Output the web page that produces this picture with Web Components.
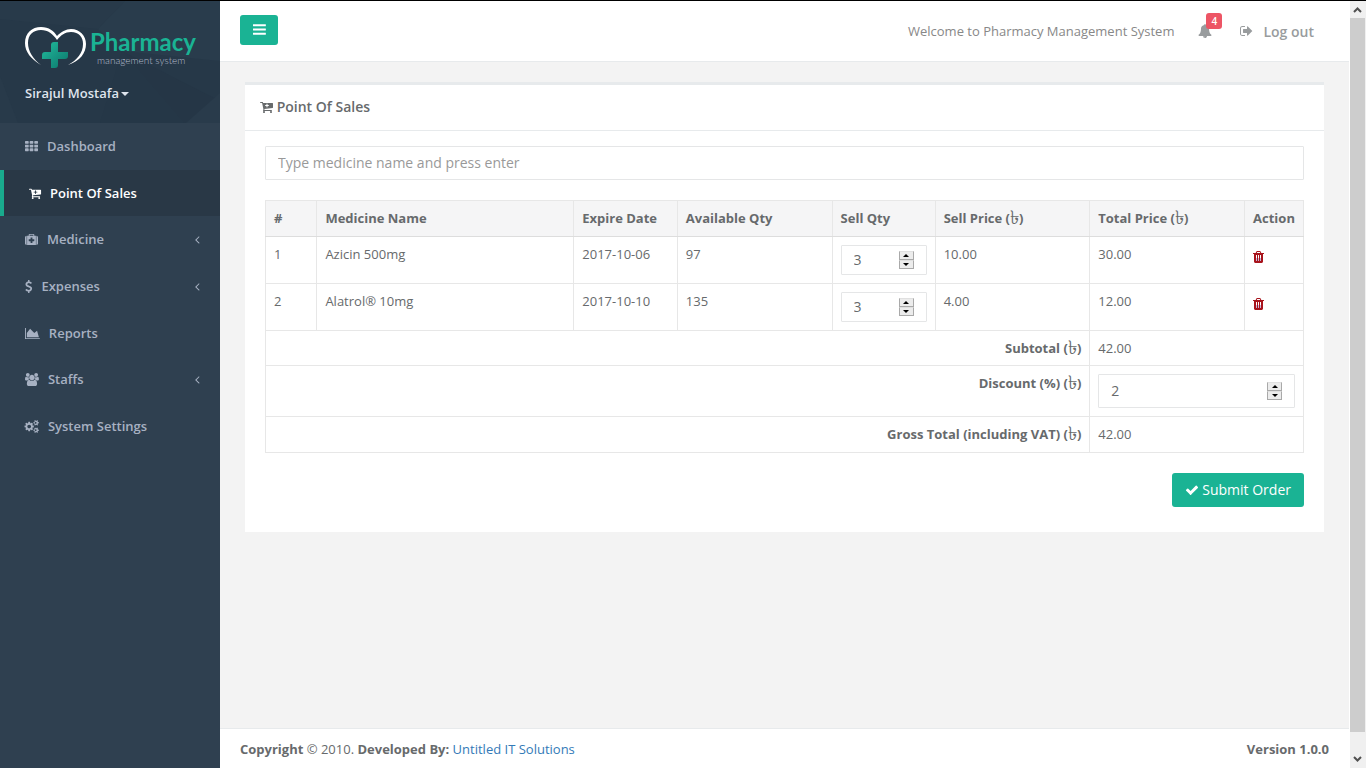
<!DOCTYPE html>
<html lang="en">
<head>
<meta charset="utf-8">
<title>Pharmacy Management System – Point Of Sales</title>
<style>
  html, body { height: 100%; }
  body { margin: 0; background: #000; color: #676a6c; font: 13px/19px "Open Sans", "Noto Sans", sans-serif; }
</style>
</head>
<body>
<pos-app></pos-app>

<script>
const cog = 'v140q0 16-149 31-12 27-30 52 51 113 51 138 0 4-4 7-122 71-124 71-8 0-46-47t-52-68q-20 2-30 2t-30-2q-14 21-52 68t-46 47q-2 0-124-71-4-3-4-7 0-25 51-138-18-25-30-52-149-15-149-31v-140q0-16 149-31 13-29 30-52-51-113-51-138 0-4 4-7 4-2 35-20t59-34 30-16q8 0 46 46.500t52 67.500q20-2 30-2t30 2q51-71 92-112l6-2q4 0 124 70 4 3 4 7 0 25-51 138 17 23 30 52 149 15 149 31z';
const slot = 'v-704q0-14-9-23t-23-9h-64q-14 0-23 9t-9 23v704q0 14 9 23t23 9h64q14 0 23-9t9-23z';
const bar = 'v128q0 26-19 45t-45 19h-1408q-26 0-45-19t-19-45v-128q0-26 19-45t45-19h1408q26 0 45 19t19 45z';
const cell = (x, y) => `M${x} ${y}v192q0 40-28 68t-68 28h-320q-40 0-68-28t-28-68v-192q0-40 28-68t68-28h320q40 0 68 28t28 68z`;
const ICONS = {
  bars: [128, 1536, `M1664 1344${bar}M1664 832${bar}M1664 320${bar}`],
  th: [0, 1792, [224, 736, 1248].map(y => cell(512, y) + cell(1152, y) + cell(1792, y)).join('')],
  cart: [64, 1664, 'M1216 704q0-26-19-45t-45-19h-128v-128q0-26-19-45t-45-19-45 19-19 45v128h-128q-26 0-45 19t-19 45 19 45 45 19h128v128q0 26 19 45t45 19 45-19 19-45v-128h128q26 0 45-19t19-45zm-512 832q0 53-37.500 90.500t-90.500 37.500-90.500-37.500-37.500-90.500 37.500-90.500 90.500-37.500 90.500 37.500 37.500 90.500zm896 0q0 53-37.500 90.500t-90.500 37.500-90.500-37.500-37.500-90.500 37.500-90.500 90.500-37.500 90.500 37.500 37.500 90.500zm128-1088v512q0 24-16 42.500t-41 21.500l-1044 122q1 7 4.500 21.500t6 26.500 2.500 22q0 16-24 64h920q26 0 45 19t19 45-19 45-45 19h-1024q-26 0-45-19t-19-45q0-14 11-39.500t29.500-59.500 20.500-38l-177-823h-204q-26 0-45-19t-19-45 19-45 45-19h256q16 0 28.500 6.500t20 15.500 13 24.500 7.500 26.500 5.500 29.500 4.500 25.500h1201q26 0 45 19t19 45z'],
  medkit: [0, 1792, 'M1280 1088v-192q0-14-9-23t-23-9h-224v-224q0-14-9-23t-23-9h-192q-14 0-23 9t-9 23v224h-224q-14 0-23 9t-9 23v192q0 14 9 23t23 9h224v224q0 14 9 23t23 9h192q14 0 23-9t9-23v-224h224q14 0 23-9t9-23zM640 384h512v-128h-512zM224 384v1280q-92 0-158-66t-66-158v-832q0-92 66-158t158-66zM1504 384v1280h-1216v-1280h224v-160q0-40 28-68t68-28h576q40 0 68 28t28 68v160zM1792 608v832q0 92-66 158t-158 66v-1280q92 0 158 66t66 158z'],
  usd: [384, 1024, 'M1362 1185q0 153-99.500 263.500t-258.500 136.500v175q0 14-9 23t-23 9h-135q-13 0-22.500-9.500t-9.500-22.500v-175q-66-9-127.500-31t-101.500-44.500-74-48-46.500-37.500-17.500-18q-17-21-2-41l103-135q7-10 23-12 15-2 24 9l2 2q113 99 243 125 37 8 74 8 81 0 142.500-43t61.500-122q0-28-15-53t-33.500-42-58.500-37.500-66-32-80-32.500q-39-16-61.500-25t-61.500-26.500-62.500-31-56.500-35.500-53.500-42.500-43.500-49-35.500-58-21-66.500-8.500-78q0-138 98-242t255-134v-180q0-13 9.500-22.500t22.500-9.500h135q14 0 23 9t9 23v176q57 6 110.500 23t87 33.500 63.500 37.500 39 29 15 14q17 18 5 38l-81 146q-8 15-23 16-14 3-27-7-3-3-14.500-12t-39-26.500-58.500-32-74.500-26-85.500-11.500q-95 0-155 43t-60 111q0 26 8.500 48t29.500 41.500 39.500 33 56 31 60.500 27 70 27.500q53 20 81 31.500t76 35 75.500 42.500 62 50 53 63.500 31.500 76.500 13 94z'],
  chart: [0, 2048, 'M2048 1536v128h-2048v-1536h128v1408zM1664 512l256 896h-1664v-576l448-576 576 576z'],
  users: [0, 1920, 'M593 896q-162 5-265 128h-134q-82 0-138-40.500t-56-118.500q0-353 124-353 6 0 43.500 21t97.500 42.500 119 21.500q67 0 133-23-5 37-5 66 0 139 81 256zm1071 637q0 120-73 189.500t-194 69.500h-874q-121 0-194-69.500t-73-189.500q0-53 3.500-103.500t14-109 26.500-108.500 43-97.500 62-81 85.500-53.500 111.500-20q10 0 43 21.500t73 48 107 48 135 21.500 135-21.500 107-48 73-48 43-21.500q61 0 111.500 20t85.500 53.500 62 81 43 97.500 26.500 108.500 14 109 3.500 103.500zm-1024-1277q0 106-75 181t-181 75-181-75-75-181 75-181 181-75 181 75 75 181zm704 384q0 159-112.500 271.500t-271.500 112.500-271.500-112.500-112.500-271.500 112.500-271.500 271.500-112.500 271.500 112.500 112.500 271.500zm576 225q0 78-56 118.500t-138 40.500h-134q-103-123-265-128 81-117 81-256 0-29-5-66 66 23 133 23 59 0 119-21.500t97.500-42.500 43.500-21q124 0 124 353zm-128-609q0 106-75 181t-181 75-181-75-75-181 75-181 181-75 181 75 75 181z'],
  cogs: [0, 1920, `M832 896q0-106-75-181t-181-75-181 75-75 181 75 181 181 75 181-75 75-181zm768 512q0-52-38-90t-90-38-90 38-38 90q0 53 37.500 90.500t90.500 37.500 90.500-37.500 37.500-90.500zm0-1024q0-52-38-90t-90-38-90 38-38 90q0 53 37.500 90.500t90.500 37.500 90.500-37.500 37.500-90.500zm-384 421v185q0 10-7 19.500t-16 10.500l-155 24q-11 35-32 76 34 48 90 115 7 11 7 20 0 12-7 19-23 30-82.500 89.500t-78.500 59.500q-11 0-21-7l-115-90q-37 19-77 31-11 108-23 155-7 24-30 24h-186q-11 0-20-7.500t-10-17.500l-23-153q-34-10-75-31l-118 89q-7 7-20 7-11 0-21-8-144-133-144-160 0-9 7-19 10-14 41-53t47-61q-23-44-35-82l-152-24q-10-1-17-9.500t-7-19.500v-185q0-10 7-19.500t16-10.500l155-24q11-35 32-76-34-48-90-115-7-11-7-20 0-12 7-20 22-30 82-89t79-59q11 0 21 7l115 90q34-18 77-32 11-108 23-154 7-24 30-24h186q11 0 20 7.500t10 17.500l23 153q34 10 75 31l118-89q8-7 20-7 11 0 21 8 144 133 144 160 0 8-7 19-12 16-42 54t-45 60q23 48 34 82l152 23q10 2 17 10.500t7 19.500zM1920 1338${cog}M1920 314${cog}`],
  bell: [0, 1792, 'M912 1696q0-16-16-16-59 0-101.500-42.500t-42.500-101.500q0-16-16-16t-16 16q0 73 51.500 124.500t124.500 51.500q16 0 16-16zm816-288q0 52-38 90t-90 38h-448q0 106-75 181t-181 75-181-75-75-181h-448q-52 0-90-38t-38-90q50-42 91-88t85-119.500 74.500-158.500 50-206 19.500-260q0-152 117-282.500t307-158.500q-8-19-8-39 0-40 28-68t68-28 68 28 28 68q0 20-8 39 190 28 307 158.500t117 282.500q0 139 19.500 260t50 206 74.500 158.500 85 119.500 91 88z'],
  signout: [64, 1664, 'M704 1440q0 4 1 20t.5 26.500-3 23.500-10 19.500-20.500 6.500h-320q-119 0-203.500-84.500t-84.500-203.500v-704q0-119 84.500-203.500t203.500-84.500h320q13 0 22.500 9.500t9.500 22.500q0 4 1 20t.5 26.500-3 23.500-10 19.500-20.500 6.500h-320q-66 0-113 47t-47 113v704q0 66 47 113t113 47h312l11.500 1 11.500 3 8 5.500 7 9 2 13.500zm928-544q0 26-19 45l-544 544q-19 19-45 19t-45-19-19-45v-288h-448q-26 0-45-19t-19-45v-384q0-26 19-45t45-19h448v-288q0-26 19-45t45-19 45 19l544 544q19 19 19 45z'],
  check: [0, 1792, 'M1671 566q0 40-28 68l-724 724-136 136q-28 28-68 28t-68-28l-136-136-362-362q-28-28-28-68t28-68l136-136q28-28 68-28t68 28l294 295 656-657q28-28 68-28t68 28l136 136q28 28 28 68z'],
  angle: [582, 640, 'M1203 544q0 13-10 23l-393 393 393 393q10 10 10 23t-10 23l-50 50q-10 10-23 10t-23-10l-466-466q-10-10-10-23t10-23l466-466q10-10 23-10t23 10l50 50q10 10 10 23z'],
  trash: [192, 1408, `M704 1376${slot}M960 1376${slot}M1216 1376${slot}M672 384h448l-48-117q-7-9-17-11h-317q-10 2-17 11zM1600 416v64q0 14-9 23t-23 9h-96v948q0 83-47 143.500t-113 60.500h-832q-66 0-113-58.500t-47-141.500v-952h-96q-14 0-23-9t-9-23v-64q0-14 9-23t23-9h309l70-167q15-37 54-63t79-26h320q40 0 79 26t54 63l70 167h309q14 0 23 9t9 23z`]
};

function define(name, markup, setup) {
  const template = document.createElement('template');
  template.innerHTML = markup;
  customElements.define(name, class extends HTMLElement {
    constructor() {
      super();
      this.attachShadow({ mode: 'open' }).append(template.content.cloneNode(true));
    }
    connectedCallback() { if (setup) setup(this, this.shadowRoot); }
  });
}

/* Icon: <fa-icon name="…">, sized by --size (height of the em square) */
define('fa-icon', `
<style>
  :host { display: inline-block; vertical-align: -2px; line-height: 0; }
  svg { display: block; height: var(--size, 14px); fill: currentColor; overflow: visible; }
</style>
<svg aria-hidden="true"><path fill-rule="evenodd"/></svg>`, (host, root) => {
  const [x, w, d] = ICONS[host.getAttribute('name')];
  root.querySelector('svg').setAttribute('viewBox', `${x} 0 ${w} 1792`);
  root.querySelector('path').setAttribute('d', d);
});

define('brand-logo', `
<style>
  :host { display: flex; align-items: flex-start; height: 44px; }
  svg { width: 62px; height: 44px; flex: none; }
  .words { display: flex; flex-direction: column; padding: 2px 0 0 3px; white-space: nowrap; font-family: Lato, sans-serif; }
  b { color: #1ab394; font-size: 24px; line-height: 27px; font-weight: 700; }
  small { color: #b4bccb; font-size: 10px; line-height: 12px; padding-left: 7px; font-weight: 300; margin-top: -1px; }
</style>
<svg viewBox="0 0 62 44" aria-hidden="true">
  <defs><linearGradient id="g" x2="1" y2="1"><stop offset="0" stop-color="#22bd9e"/><stop offset="1" stop-color="#0c746b"/></linearGradient></defs>
  <path d="M16 39C6 33 0 26 0 17C0 7 7 1 16 1C24 1 29 5 32 10C36 6 41 3 46 3C55 3 61 10 61 18C61 27 55 35 43 39C52 34 58 27 58 18C58 11 54 6 46 6C40 6 36 9 32 14C28 8 23 4 16 4C8 4 3 9 3 17C3 25 8 33 16 39Z" fill="#fff"/>
  <path d="M29 16h4v10h10v4q0 3-3 3h-7v6q0 3-3 3h-4v-9h-9v-4q0-3 3-3h6v-7q0-3 3-3Z" fill="url(#g)"/>
</svg>
<div class="words"><b>Pharmacy</b><small>management system</small></div>`);

/* Menu entry: icon="…", and optionally active or expandable */
customElements.define('nav-entry', class extends HTMLElement {
  constructor() {
    super();
    const active = this.hasAttribute('active');
    const arrow = this.hasAttribute('expandable') ? '<fa-icon class="arrow" name="angle"></fa-icon>' : '';
    this.attachShadow({ mode: 'open' }).innerHTML = `
<style>
  :host { display: block; }
  a { display: flex; align-items: center; height: 100%; box-sizing: border-box; padding: 0 20px 0 25px; color: #a7b1c2; font-weight: 600; text-decoration: none; }
  fa-icon { --size: 13px; }
  .icon { margin-right: 9px; }
  .arrow { margin-left: auto; }
  :host([active]) a { background: #293846; color: #fff; border-left: 4px solid #19aa8d; }
</style>
<a href="#"${active ? ' aria-current="page"' : ''}><fa-icon class="icon" name="${this.getAttribute('icon')}"></fa-icon><slot></slot>${arrow}</a>`;
  }
});

define('side-bar', `
<style>
  :host { display: block; background: #2f4050; }
  header { display: flex; flex-direction: column; position: relative; box-sizing: border-box; height: 122px; padding: 25px 20px 0 25px; background: #263848; overflow: hidden; }
  .facets { position: absolute; inset: 0; width: 100%; height: 100%; }
  brand-logo, button { position: relative; }
  button { align-self: flex-start; margin-top: 14px; padding: 0; border: 0; background: none; font: inherit; font-weight: 600; color: #dfe4ed; display: flex; align-items: center; gap: 2px; }
  .caret { border: 4px solid transparent; border-top-color: currentColor; border-bottom: 0; }
  nav { display: grid; grid-auto-rows: 1fr; height: 327px; }
</style>
<header>
  <svg class="facets" viewBox="0 0 220 122" preserveAspectRatio="none" aria-hidden="true">
    <path d="M0 0H125L98 28L0 18Z" fill="#283a4a"/><path d="M125 0H220V60L122 50L98 28Z" fill="#293c4c"/>
    <path d="M0 75L18 122H0Z" fill="#283a4a"/>
    <path d="M122 50L220 100V122H184Z" fill="#253646"/><path d="M122 50L184 122H100Z" fill="#253747"/>
    <path d="M220 92L186 122H220Z" fill="#293b4b"/>
  </svg>
  <brand-logo></brand-logo>
  <button type="button">Sirajul Mostafa<span class="caret"></span></button>
</header>
<nav aria-label="Main">
  <nav-entry icon="th">Dashboard</nav-entry>
  <nav-entry icon="cart" active>Point Of Sales</nav-entry>
  <nav-entry icon="medkit" expandable>Medicine</nav-entry>
  <nav-entry icon="usd" expandable>Expenses</nav-entry>
  <nav-entry icon="chart">Reports</nav-entry>
  <nav-entry icon="users" expandable>Staffs</nav-entry>
  <nav-entry icon="cogs">System Settings</nav-entry>
</nav>`);

define('top-bar', `
<style>
  :host { display: flex; align-items: center; box-sizing: border-box; height: 61px; padding: 0 35px 0 20px; background: #fff; border-bottom: 1px solid #e7eaec; }
  .menu { align-self: flex-start; margin-top: 14px; width: 38px; height: 30px; padding: 0; border: 0; border-radius: 3px; background: #1ab394; color: #fff; --size: 15px; }
  .welcome { margin-left: auto; color: #888; }
  .bell { position: relative; margin-left: 24px; padding: 0; border: 0; background: none; color: #999c9e; --size: 14px; }
  .badge { position: absolute; left: 8px; top: -11px; width: 16px; height: 16px; border-radius: 3px; background: #ed5565; color: #fff; font: 600 10px/16px "Open Sans", sans-serif; text-align: center; }
  a { margin-left: 28px; display: flex; align-items: center; gap: 10px; color: #999c9e; font-size: 14px; font-weight: 600; text-decoration: none; --size: 14px; }
</style>
<button class="menu" type="button" aria-label="Toggle menu"><fa-icon name="bars"></fa-icon></button>
<span class="welcome">Welcome to Pharmacy Management System</span>
<button class="bell" type="button" aria-label="Notifications"><fa-icon name="bell"></fa-icon><span class="badge">4</span></button>
<a href="#"><fa-icon name="signout"></fa-icon>Log out</a>`);

define('number-box', `
<style>
  :host { display: flex; position: relative; height: 30px; }
  input { flex: 1; min-width: 0; width: 100%; box-sizing: border-box; height: 100%; margin: 0; padding: 0 34px 2px 12px; border: 1px solid #e5e6e7; border-radius: 1px; background: #fff; color: #676a6c; font: inherit; font-size: 14px; appearance: textfield; }
  input::-webkit-inner-spin-button { appearance: none; margin: 0; }
  .spin { position: absolute; right: 13px; top: 50%; height: 18px; margin-top: -9px; width: 15px; display: flex; flex-direction: column; }
  button { flex: 1; display: flex; align-items: center; justify-content: center; padding: 0; border: 1px solid #a9a9a9; border-top-color: #e0e0e0; background: #ececec; }
  button::before { content: ""; border: 3px solid transparent; border-bottom-color: #000; border-top: 0; }
  .down::before { border: 3px solid transparent; border-top-color: #000; border-bottom: 0; }
</style>
<input type="number">
<span class="spin"><button type="button" class="up" tabindex="-1" aria-label="Increase"></button><button type="button" class="down" tabindex="-1" aria-label="Decrease"></button></span>`,
(host, root) => {
  const input = root.querySelector('input');
  input.value = host.getAttribute('value');
  input.setAttribute('aria-label', host.getAttribute('label'));
  root.querySelector('.up').onclick = () => input.stepUp();
  root.querySelector('.down').onclick = () => input.stepDown();
});

define('order-table', `
<style>
  :host { display: block; }
  table { width: 100%; border-collapse: collapse; border: 1px solid #e7e7e7; }
  th, td { padding: 8px; border: 1px solid #e7e7e7; text-align: left; vertical-align: top; line-height: 18px; }
  thead th { background: #f5f5f6; line-height: 19px; border-bottom-color: #ddd; white-space: nowrap; font-weight: 700; }
  tfoot th { text-align: right; font-weight: 700; }
  .grand th { line-height: 19px; }
  .taka { font-size: 19px; line-height: 0; font-weight: 400; vertical-align: -1px; }
  .delete { display: block; margin-top: 5px; padding: 0; border: 0; background: linear-gradient(#c9b4d8, #c9b4d8) center 8px / 7px 5px no-repeat; color: #a8141c; line-height: 0; --size: 14px; }
  .tall { height: 34px; }
</style>
<table>
  <colgroup><col style="width:5%"><col style="width:25%"><col style="width:10%"><col style="width:15%"><col style="width:10%"><col style="width:15%"><col style="width:15%"><col style="width:5%"></colgroup>
  <thead><tr><th>#</th><th>Medicine Name</th><th>Expire Date</th><th>Available Qty</th><th>Sell Qty</th><th>Sell Price (<span class="taka">৳</span>)</th><th>Total Price (<span class="taka">৳</span>)</th><th>Action</th></tr></thead>
  <tbody>
    <tr><td>1</td><td>Azicin 500mg</td><td>2017-10-06</td><td>97</td><td><number-box value="3" label="Sell quantity, Azicin 500mg"></number-box></td><td>10.00</td><td>30.00</td><td><button class="delete" type="button" aria-label="Remove Azicin 500mg"><fa-icon name="trash"></fa-icon></button></td></tr>
    <tr><td>2</td><td>Alatrol® 10mg</td><td>2017-10-10</td><td>135</td><td><number-box value="3" label="Sell quantity, Alatrol 10mg"></number-box></td><td>4.00</td><td>12.00</td><td><button class="delete" type="button" aria-label="Remove Alatrol 10mg"><fa-icon name="trash"></fa-icon></button></td></tr>
  </tbody>
  <tfoot>
    <tr><th colspan="6">Subtotal (<span class="taka">৳</span>)</th><td colspan="2">42.00</td></tr>
    <tr><th colspan="6">Discount (%) (<span class="taka">৳</span>)</th><td colspan="2"><number-box class="tall" value="2" label="Discount"></number-box></td></tr>
    <tr class="grand"><th colspan="6">Gross Total (including VAT) (<span class="taka">৳</span>)</th><td colspan="2">42.00</td></tr>
  </tfoot>
</table>`);

define('content-panel', `
<style>
  :host { display: block; background: #fff; border-top: 3px solid #e7eaec; }
  h5 { margin: 0; padding: 12px 15px 14px; border-bottom: 1px solid #e7eaec; font-size: 14px; line-height: 19px; font-weight: 600; --size: 14px; }
  .body { padding: 15px 20px 25px; }
</style>
<h5><slot name="title"></slot></h5>
<div class="body"><slot></slot></div>`);

define('pos-form', `
<style>
  :host { display: block; }
  input { display: block; width: 100%; height: 34px; box-sizing: border-box; margin: 0 0 20px; padding: 0 12px 2px; border: 1px solid #e5e6e7; border-radius: 1px; font: inherit; font-size: 14px; color: inherit; }
  input::placeholder { color: #999; opacity: 1; }
  footer { display: flex; justify-content: flex-end; margin-top: 20px; }
  button { height: 34px; padding: 0 13px 1px; border: 0; border-radius: 3px; background: #1ab394; color: #fff; font: inherit; font-size: 14px; --size: 14px; }
</style>
<input type="text" placeholder="Type medicine name and press enter" aria-label="Medicine name">
<order-table></order-table>
<footer><button type="button"><fa-icon name="check"></fa-icon> Submit Order</button></footer>`);

define('page-footer', `
<style>
  :host { display: flex; justify-content: space-between; padding: 11px 20px 9px; background: #fff; border-top: 1px solid #e7eaec; }
  a { color: #337ab7; text-decoration: none; }
</style>
<div><b>Copyright</b> © 2010. <b>Developed By:</b> <a href="#">Untitled IT Solutions</a></div>
<b>Version 1.0.0</b>`);

define('scroll-rail', `
<style>
  :host { display: flex; flex-direction: column; background: #f0f0f0; padding-right: 1px; }
  svg { width: 15px; height: 17px; fill: none; stroke: #505050; stroke-width: 2; flex: none; }
  .thumb { flex: 1; background: #cdcdcd; }
  .end { height: 36px; display: flex; align-items: flex-end; }
</style>
<svg viewBox="0 0 15 17" aria-hidden="true"><path d="M4 11l3.500-3.500L11 11"/></svg>
<div class="thumb"></div>
<div class="end"><svg viewBox="0 0 15 17" aria-hidden="true"><path d="M4 6l3.500 3.500L11 6"/></svg></div>`);

define('pos-app', `
<style>
  :host { display: grid; grid-template-columns: 220px minmax(0, 1fr) 16px; box-sizing: border-box; min-height: 100vh; padding-top: 1px; }
  .page { display: flex; flex-direction: column; background: #f3f3f3; border-right: 1px solid #fff; }
  main { flex: 1; padding: 20px 25px; }
</style>
<side-bar></side-bar>
<div class="page">
  <top-bar></top-bar>
  <main>
    <content-panel>
      <span slot="title"><fa-icon name="cart"></fa-icon> Point Of Sales</span>
      <pos-form></pos-form>
    </content-panel>
  </main>
  <page-footer></page-footer>
</div>
<scroll-rail></scroll-rail>`);
</script>
</body>
</html>
